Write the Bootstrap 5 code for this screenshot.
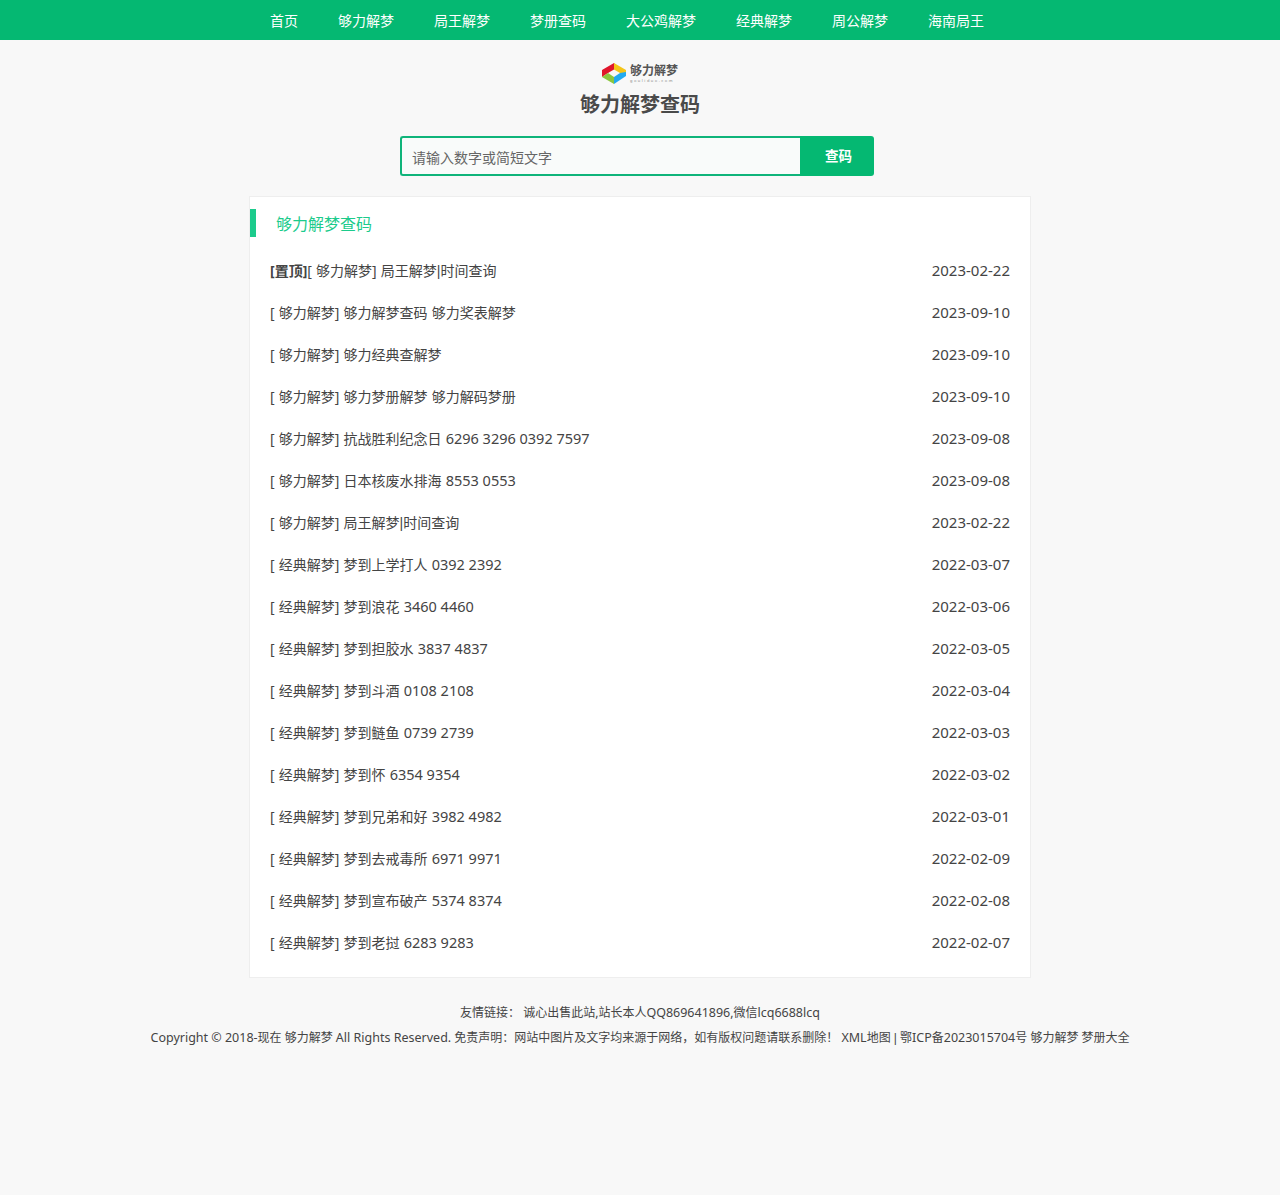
<!DOCTYPE html>
<html lang="zh-CN">
<head>
  <meta charset="UTF-8">
  <meta name="viewport" content="width=device-width, initial-scale=1.0">
  <title>够力解梦查码</title>
  <link href="https://cdn.jsdelivr.net/npm/bootstrap@5.3.0/dist/css/bootstrap.min.css" rel="stylesheet">
  <style>
    body { background: #f8f8f8; color: #444; font-family: "Noto Sans", "Noto Sans CJK SC", sans-serif; font-size: 14px; min-height: 1195px; }
    a { color: inherit; text-decoration: none; }
    .top-bar { background: #05b872; height: 40px; }
    .top-inner { width: 780px; margin: 0 auto; }
    .top-inner a { color: #fff; line-height: 42px; padding: 0 20px; }
    .brand-area { padding-top: 23px; }
    .logo-text { font-size: 12px; font-weight: 700; color: #555; line-height: 14px; }
    .logo-sub { font-size: 4px; letter-spacing: 1.5px; color: #888; line-height: 5px; }
    .site-title { font-size: 20px; font-weight: 700; color: #4a4a4a; line-height: 30px; margin: 6px 0 0; }
    .search-box { width: 474px; height: 40px; margin: 16px 0 20px 400px; }
    .search-box input { width: 400px; border: 2px solid #0fb47a; border-right: 0; border-radius: 3px 0 0 3px; background: #f9fbfa; padding: 2px 10px 0; font-size: 14px; color: #555; outline: 0; font-family: inherit; }
    .search-box input::placeholder { color: #666; }
    .search-box button { width: 74px; background: #05b872; color: #fff; border: 0; border-radius: 0 3px 3px 0; padding: 0 0 0 3px; font-size: 13.5px; font-weight: 700; font-family: inherit; }
    .list-panel { width: 782px; height: 782px; margin: 0 auto; background: #fff; border: 1px solid #eee; padding-top: 12px; }
    .panel-head { height: 28px; line-height: 30px; border-left: 6px solid #1ccb8c; padding-left: 20px; font-size: 16px; color: #1ccb8c; margin-bottom: 13px; }
    .news-row { height: 42px; line-height: 42px; padding: 0 20px; word-spacing: .5px; }
    .news-date { font-size: 15px; line-height: 40px; }
    .code-num { font-size: 14.5px; line-height: 1; word-spacing: 0; }
    .thin-pipe { font-family: "Liberation Sans", sans-serif; }
    .foot-area { text-align: center; font-size: 12px; color: #444; padding-top: 22px; line-height: 25px; }
    .foot-latin { font-size: 12.5px; line-height: 1; }
  </style>
</head>
<body>
  <div class="top-bar">
    <div class="top-inner d-flex">
      <a href="#">首页</a>
      <a href="#">够力解梦</a>
      <a href="#">局王解梦</a>
      <a href="#">梦册查码</a>
      <a href="#">大公鸡解梦</a>
      <a href="#">经典解梦</a>
      <a href="#">周公解梦</a>
      <a href="#">海南局王</a>
    </div>
  </div>

  <div class="brand-area text-center">
    <div class="d-flex justify-content-center align-items-center gap-1">
      <svg width="24" height="21" viewBox="0 0 24 21">
        <polygon points="0,7 12,0 15,4.800 6,10 0,14" fill="#e0162b"/>
        <polygon points="12,0 24,7 24,10 18,10 12,6.500" fill="#f5c518"/>
        <polygon points="24,9 24,13 12,21 12,14 18,10" fill="#22aaf0"/>
        <polygon points="0,14 6,10 12,14 12,21" fill="#8cc63f"/>
      </svg>
      <div class="text-start">
        <div class="logo-text">够力解梦</div>
        <div class="logo-sub">gouliduo.com</div>
      </div>
    </div>
    <h1 class="site-title">够力解梦查码</h1>
  </div>

  <form class="search-box d-flex">
    <input type="text" placeholder="请输入数字或简短文字">
    <button type="button">查码</button>
  </form>

  <div class="list-panel">
    <div class="panel-head">够力解梦查码</div>
    <div class="news-row d-flex justify-content-between"><a href="#"><b>[置顶]</b>[ 够力解梦] 局王解梦<span class="thin-pipe">|</span>时间查询</a><span class="news-date">2023-02-22</span></div>
    <div class="news-row d-flex justify-content-between"><a href="#">[ 够力解梦] 够力解梦查码 够力奖表解梦</a><span class="news-date">2023-09-10</span></div>
    <div class="news-row d-flex justify-content-between"><a href="#">[ 够力解梦] 够力经典查解梦</a><span class="news-date">2023-09-10</span></div>
    <div class="news-row d-flex justify-content-between"><a href="#">[ 够力解梦] 够力梦册解梦 够力解码梦册</a><span class="news-date">2023-09-10</span></div>
    <div class="news-row d-flex justify-content-between"><a href="#">[ 够力解梦] 抗战胜利纪念日 <span class="code-num">6296 3296 0392 7597</span></a><span class="news-date">2023-09-08</span></div>
    <div class="news-row d-flex justify-content-between"><a href="#">[ 够力解梦] 日本核废水排海 <span class="code-num">8553 0553</span></a><span class="news-date">2023-09-08</span></div>
    <div class="news-row d-flex justify-content-between"><a href="#">[ 够力解梦] 局王解梦<span class="thin-pipe">|</span>时间查询</a><span class="news-date">2023-02-22</span></div>
    <div class="news-row d-flex justify-content-between"><a href="#">[ 经典解梦] 梦到上学打人 <span class="code-num">0392 2392</span></a><span class="news-date">2022-03-07</span></div>
    <div class="news-row d-flex justify-content-between"><a href="#">[ 经典解梦] 梦到浪花 <span class="code-num">3460 4460</span></a><span class="news-date">2022-03-06</span></div>
    <div class="news-row d-flex justify-content-between"><a href="#">[ 经典解梦] 梦到担胶水 <span class="code-num">3837 4837</span></a><span class="news-date">2022-03-05</span></div>
    <div class="news-row d-flex justify-content-between"><a href="#">[ 经典解梦] 梦到斗酒 <span class="code-num">0108 2108</span></a><span class="news-date">2022-03-04</span></div>
    <div class="news-row d-flex justify-content-between"><a href="#">[ 经典解梦] 梦到鲢鱼 <span class="code-num">0739 2739</span></a><span class="news-date">2022-03-03</span></div>
    <div class="news-row d-flex justify-content-between"><a href="#">[ 经典解梦] 梦到怀 <span class="code-num">6354 9354</span></a><span class="news-date">2022-03-02</span></div>
    <div class="news-row d-flex justify-content-between"><a href="#">[ 经典解梦] 梦到兄弟和好 <span class="code-num">3982 4982</span></a><span class="news-date">2022-03-01</span></div>
    <div class="news-row d-flex justify-content-between"><a href="#">[ 经典解梦] 梦到去戒毒所 <span class="code-num">6971 9971</span></a><span class="news-date">2022-02-09</span></div>
    <div class="news-row d-flex justify-content-between"><a href="#">[ 经典解梦] 梦到宣布破产 <span class="code-num">5374 8374</span></a><span class="news-date">2022-02-08</span></div>
    <div class="news-row d-flex justify-content-between"><a href="#">[ 经典解梦] 梦到老挝 <span class="code-num">6283 9283</span></a><span class="news-date">2022-02-07</span></div>
  </div>

  <div class="foot-area">
    <div>友情链接： 诚心出售此站,站长本人<span class="foot-latin">QQ869641896</span>,微信<span class="foot-latin">lcq6688lcq</span></div>
    <div><span class="foot-latin">Copyright © 2018-</span>现在 够力解梦 <span class="foot-latin">All Rights Reserved.</span> 免责声明：网站中图片及文字均来源于网络，如有版权问题请联系删除！ <span class="foot-latin">XML</span>地图 <span class="thin-pipe">|</span> 鄂<span class="foot-latin">ICP</span>备<span class="foot-latin">2023015704</span>号 够力解梦 梦册大全</div>
  </div>
  <script src="https://cdn.jsdelivr.net/npm/bootstrap@5.3.0/dist/js/bootstrap.bundle.min.js"></script>
</body>
</html>
